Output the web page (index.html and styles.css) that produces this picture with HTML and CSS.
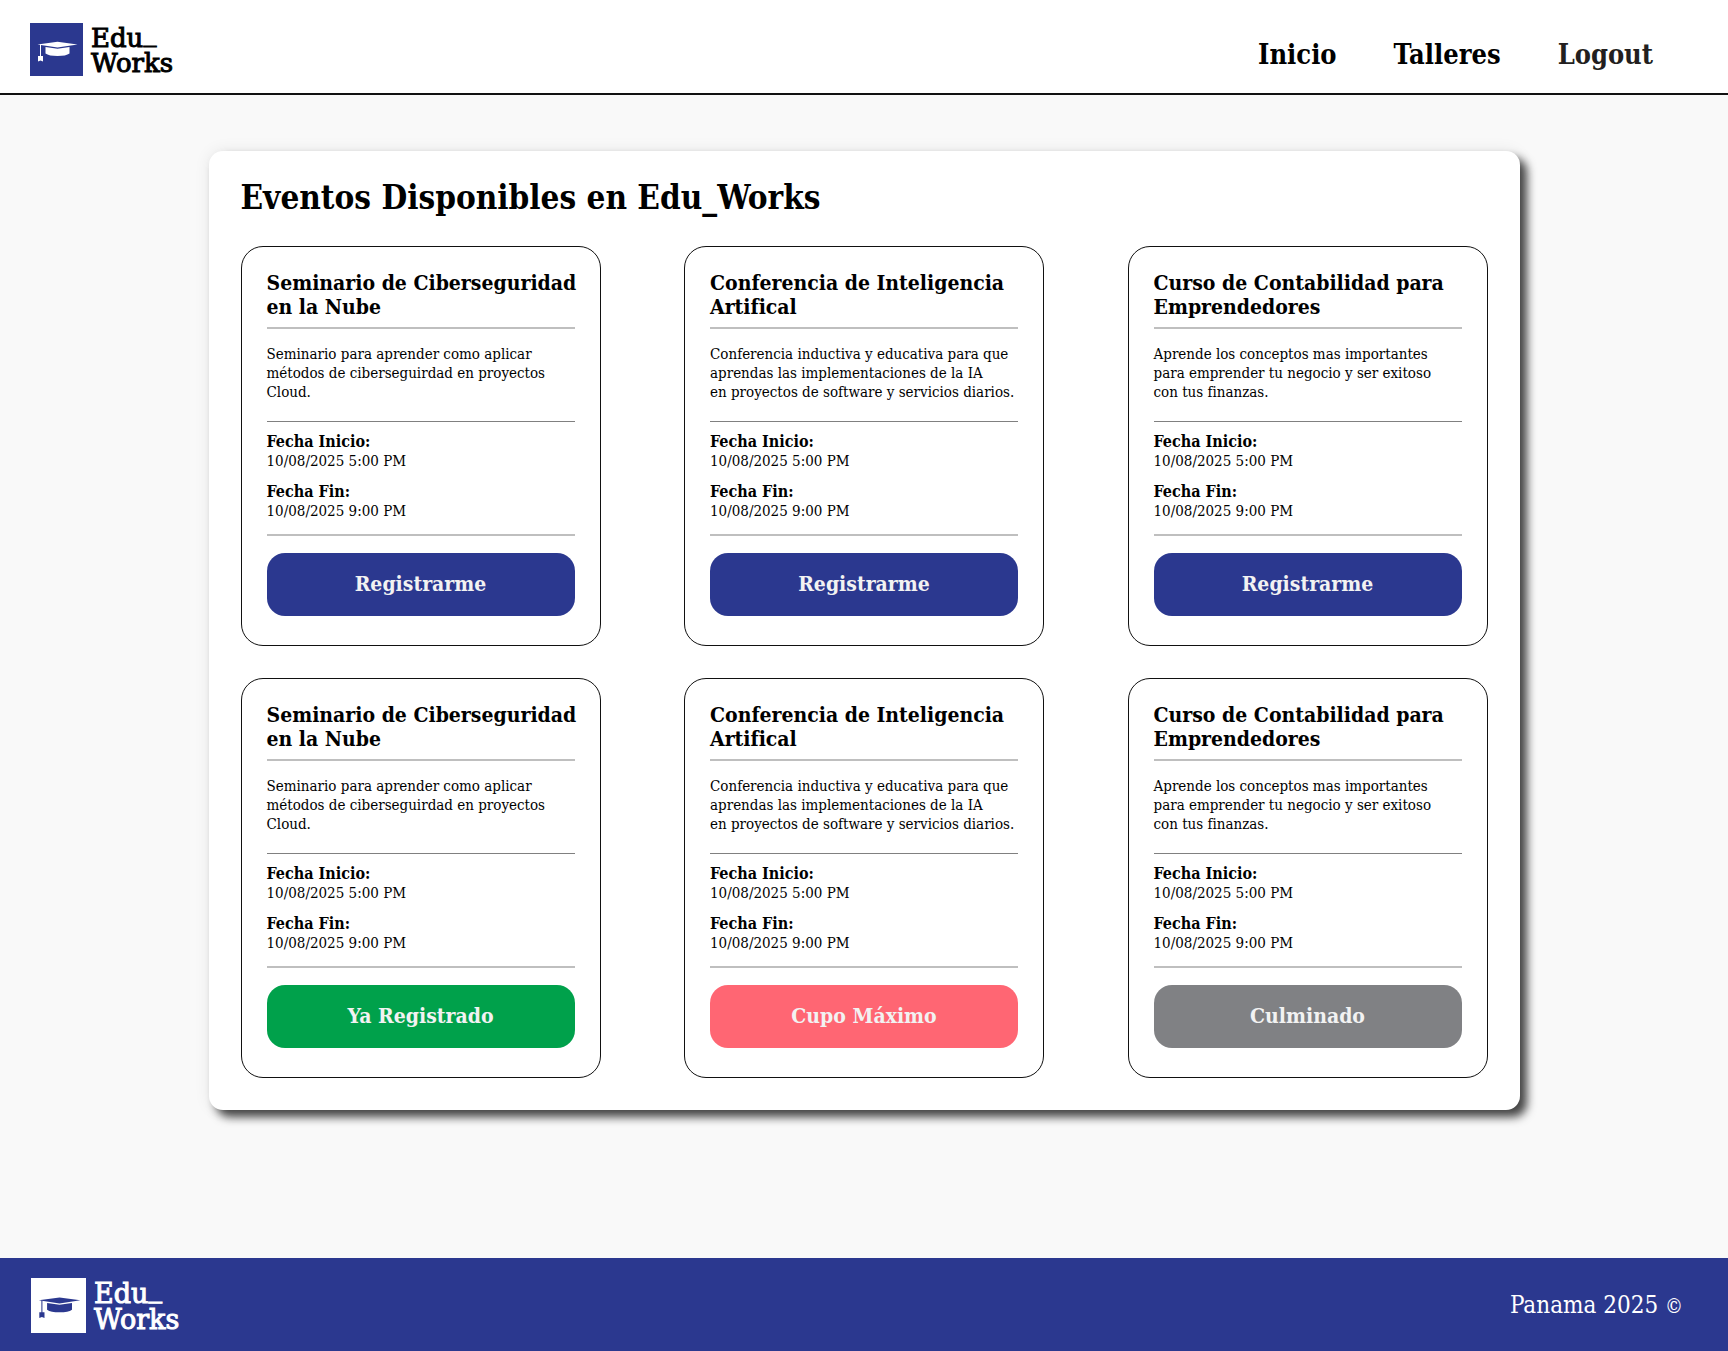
FILE: index.html
```
<!DOCTYPE html>
<html lang="es">
<head>
<meta charset="utf-8">
<meta name="viewport" content="width=device-width, initial-scale=1">
<title>Eventos Disponibles en Edu_Works</title>
<link rel="stylesheet" href="styles.css">
</head>
<body>
<svg class="sprite" aria-hidden="true">
  <symbol id="cap" viewBox="0 0 53 53">
    <path d="M7.500 21.500 L27.500 18.700 L47.500 21.500 L27.500 24.500 Z"/>
    <path d="M15.500 24 L27.500 25.800 L39.500 24 V30.500 Q36 33 27.500 33 Q19 33 15.500 30.500 Z"/>
    <path d="M10 21.500 H11 V33 H13 V38.500 L10.500 37.500 L8 38.500 V33 H10 Z"/>
  </symbol>
</svg>

<header class="site-header">
  <a class="logo" href="#">
    <svg class="logo-mark" viewBox="0 0 53 53" aria-hidden="true"><use href="#cap"/></svg>
    <span class="logo-text">Edu<span class="logo-dash">_</span><br>Works</span>
  </a>
  <nav class="nav">
    <a href="#">Inicio</a>
    <a href="#">Talleres</a>
    <a class="nav-logout" href="#">Logout</a>
  </nav>
</header>

<main class="main">
  <section class="panel">
    <h1 class="panel-title">Eventos Disponibles en Edu_Works</h1>
    <div class="cards">
      <article class="card">
        <h2 class="card-title">Seminario de Ciberseguridad<br>en la Nube</h2>
        <p class="card-text">Seminario para aprender como aplicar<br>métodos de ciberseguirdad en proyectos<br>Cloud.</p>
        <dl class="dates">
          <div><dt>Fecha Inicio:</dt><dd>10/08/2025 5:00 PM</dd></div>
          <div><dt>Fecha Fin:</dt><dd>10/08/2025 9:00 PM</dd></div>
        </dl>
        <button class="btn" type="button">Registrarme</button>
      </article>
      <article class="card">
        <h2 class="card-title">Conferencia de Inteligencia<br>Artifical</h2>
        <p class="card-text">Conferencia inductiva y educativa para que<br>aprendas las implementaciones de la IA<br>en proyectos de software y servicios diarios.</p>
        <dl class="dates">
          <div><dt>Fecha Inicio:</dt><dd>10/08/2025 5:00 PM</dd></div>
          <div><dt>Fecha Fin:</dt><dd>10/08/2025 9:00 PM</dd></div>
        </dl>
        <button class="btn" type="button">Registrarme</button>
      </article>
      <article class="card">
        <h2 class="card-title">Curso de Contabilidad para<br>Emprendedores</h2>
        <p class="card-text">Aprende los conceptos mas importantes<br>para emprender tu negocio y ser exitoso<br>con tus finanzas.</p>
        <dl class="dates">
          <div><dt>Fecha Inicio:</dt><dd>10/08/2025 5:00 PM</dd></div>
          <div><dt>Fecha Fin:</dt><dd>10/08/2025 9:00 PM</dd></div>
        </dl>
        <button class="btn" type="button">Registrarme</button>
      </article>
      <article class="card">
        <h2 class="card-title">Seminario de Ciberseguridad<br>en la Nube</h2>
        <p class="card-text">Seminario para aprender como aplicar<br>métodos de ciberseguirdad en proyectos<br>Cloud.</p>
        <dl class="dates">
          <div><dt>Fecha Inicio:</dt><dd>10/08/2025 5:00 PM</dd></div>
          <div><dt>Fecha Fin:</dt><dd>10/08/2025 9:00 PM</dd></div>
        </dl>
        <button class="btn btn-registered" type="button">Ya Registrado</button>
      </article>
      <article class="card">
        <h2 class="card-title">Conferencia de Inteligencia<br>Artifical</h2>
        <p class="card-text">Conferencia inductiva y educativa para que<br>aprendas las implementaciones de la IA<br>en proyectos de software y servicios diarios.</p>
        <dl class="dates">
          <div><dt>Fecha Inicio:</dt><dd>10/08/2025 5:00 PM</dd></div>
          <div><dt>Fecha Fin:</dt><dd>10/08/2025 9:00 PM</dd></div>
        </dl>
        <button class="btn btn-full" type="button">Cupo Máximo</button>
      </article>
      <article class="card">
        <h2 class="card-title">Curso de Contabilidad para<br>Emprendedores</h2>
        <p class="card-text">Aprende los conceptos mas importantes<br>para emprender tu negocio y ser exitoso<br>con tus finanzas.</p>
        <dl class="dates">
          <div><dt>Fecha Inicio:</dt><dd>10/08/2025 5:00 PM</dd></div>
          <div><dt>Fecha Fin:</dt><dd>10/08/2025 9:00 PM</dd></div>
        </dl>
        <button class="btn btn-ended" type="button">Culminado</button>
      </article>
    </div>
  </section>
</main>

<footer class="site-footer">
  <a class="logo logo-light" href="#">
    <svg class="logo-mark" viewBox="0 0 53 53" aria-hidden="true"><use href="#cap"/></svg>
    <span class="logo-text">Edu<span class="logo-dash">_</span><br>Works</span>
  </a>
  <p class="copyright">Panama 2025 <span class="copy-sign">©</span></p>
</footer>
</body>
</html>
```

FILE: styles.css
```
:root {
  --blue: #2b388f;
  --page: #f9f9f9;
}

* {
  box-sizing: border-box;
  margin: 0;
  padding: 0;
}

body {
  display: flex;
  flex-direction: column;
  min-height: 100vh;
  background: var(--page);
  color: #000;
  font-family: "DejaVu Serif Condensed", "DejaVu Serif", serif;
}

a {
  color: inherit;
  text-decoration: none;
}

.sprite {
  display: none;
}

.site-header {
  display: flex;
  justify-content: space-between;
  align-items: flex-start;
  padding: 23px 75px 17px 30px;
  background: #fff;
  border-bottom: 2px solid #111;
}

.logo {
  display: flex;
  align-items: center;
  gap: 8px;
}

.logo-mark {
  width: 53px;
  height: 53px;
  background: var(--blue);
  fill: #fff;
}

.logo-text {
  padding-top: 2px;
  font-family: "DejaVu Serif", serif;
  font-size: 26px;
  line-height: 25px;
  -webkit-text-stroke: 1px currentColor;
}

.logo-dash {
  line-height: 1px;
  vertical-align: 6px;
}

.nav {
  display: flex;
  gap: 57px;
  padding-top: 15px;
  font-size: 27px;
  line-height: 34px;
  font-weight: bold;
}

.nav-logout {
  color: #231f20;
}

.main {
  flex: 1;
  padding: 56px 32px 147px;
}

.panel {
  max-width: 1311px;
  margin: 0 auto;
  padding: 27px 32px 32px;
  background: #fff;
  border-radius: 14px;
  box-shadow: 7px 7px 10px #444, 0 0 16px rgba(0, 0, 0, 0.08);
}

.panel-title {
  margin-bottom: 28px;
  font-size: 33px;
  line-height: 40px;
}

.cards {
  display: grid;
  grid-template-columns: repeat(auto-fit, 360px);
  justify-content: space-between;
  row-gap: 32px;
}

.card {
  padding: 24px 25px 29px;
  border: 1px solid #111;
  border-radius: 22px;
}

.card-title {
  padding-bottom: 8px;
  border-bottom: 2px solid #bfbfbf;
  font-size: 21px;
  line-height: 24px;
  white-space: nowrap;
}

.card-text {
  padding: 16px 0 19px;
  border-bottom: 1px solid #808080;
  font-size: 15px;
  line-height: 19px;
  white-space: nowrap;
}

.dates {
  display: grid;
  gap: 12px;
  padding: 10px 0 14px;
  border-bottom: 2px solid #bfbfbf;
  font-size: 15px;
  line-height: 18px;
}

.dates dt {
  font-size: 16px;
  line-height: 20px;
  font-weight: bold;
}

.btn {
  width: 100%;
  height: 63px;
  margin-top: 17px;
  padding-bottom: 2px;
  border: 0;
  border-radius: 18px;
  background: var(--blue);
  color: #f2f2f2;
  font-family: inherit;
  font-size: 21px;
  font-weight: bold;
}

.btn-registered {
  background: #00a14b;
}

.btn-full {
  background: #ff6673;
}

.btn-ended {
  background: #808184;
}

.site-footer {
  display: flex;
  justify-content: space-between;
  align-items: center;
  padding: 20px 45px 18px 31px;
  background: var(--blue);
  color: #fff;
}

.logo-light .logo-mark {
  width: 55px;
  height: 55px;
  background: #fff;
  fill: var(--blue);
}

.logo-light .logo-text {
  font-size: 27px;
  line-height: 26px;
}

.copyright {
  font-size: 24px;
  line-height: 32px;
}

.copy-sign {
  font-size: 20px;
}
```
